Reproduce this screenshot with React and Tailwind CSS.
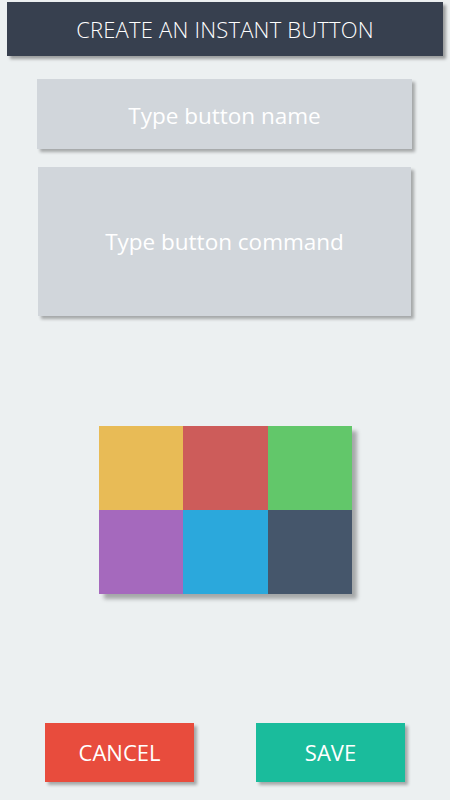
import React from 'react';

const colors = ['bg-[#e8bb56]', 'bg-[#cd5c5a]', 'bg-[#62c76a]', 'bg-[#a569bd]', 'bg-[#2ba8dc]', 'bg-[#45566b]'];

export default function App() {
  return (
    <div className="w-[450px] h-[800px] bg-[#ecf0f1] flex flex-col overflow-hidden" style={{ fontFamily: '"Open Sans", sans-serif' }}>
      {/* Header */}
      <div className="mt-[2px] mx-[7px] h-[54px] bg-[#37404f] shadow-[3px_3px_3px_rgba(0,0,0,0.35)] flex items-center justify-center">
        <h1 className="text-white text-[22px] font-light tracking-[0.2px]">CREATE AN INSTANT BUTTON</h1>
      </div>

      {/* Inputs */}
      <div className="mt-[23px] ml-[37px] w-[375px] h-[70px] bg-[#d1d6db] shadow-[3px_3px_3px_rgba(0,0,0,0.3)] flex items-center justify-center pt-[4px]">
        <span className="text-white text-[22.5px]">Type button name</span>
      </div>
      <div className="mt-[18px] ml-[38px] w-[373px] h-[149px] bg-[#d1d6db] shadow-[3px_3px_3px_rgba(0,0,0,0.3)] flex items-center justify-center">
        <span className="text-white text-[22.5px]">Type button command</span>
      </div>

      {/* Colour picker */}
      <div className="mt-[110px] ml-[99px] w-[253px] h-[168px] grid grid-cols-3 grid-rows-2 shadow-[5px_5px_4px_rgba(0,0,0,0.3)]">
        {colors.map((c) => (
          <div key={c} className={c} />
        ))}
      </div>

      {/* Actions */}
      <div className="mt-[129px] flex">
        <button className="ml-[45px] w-[149px] h-[59px] bg-[#e84c3d] text-white text-[22px] shadow-[3px_3px_3px_rgba(0,0,0,0.3)]">CANCEL</button>
        <button className="ml-[62px] w-[149px] h-[59px] bg-[#1abc9c] text-white text-[22px] shadow-[3px_3px_3px_rgba(0,0,0,0.3)]">SAVE</button>
      </div>
    </div>
  );
}
